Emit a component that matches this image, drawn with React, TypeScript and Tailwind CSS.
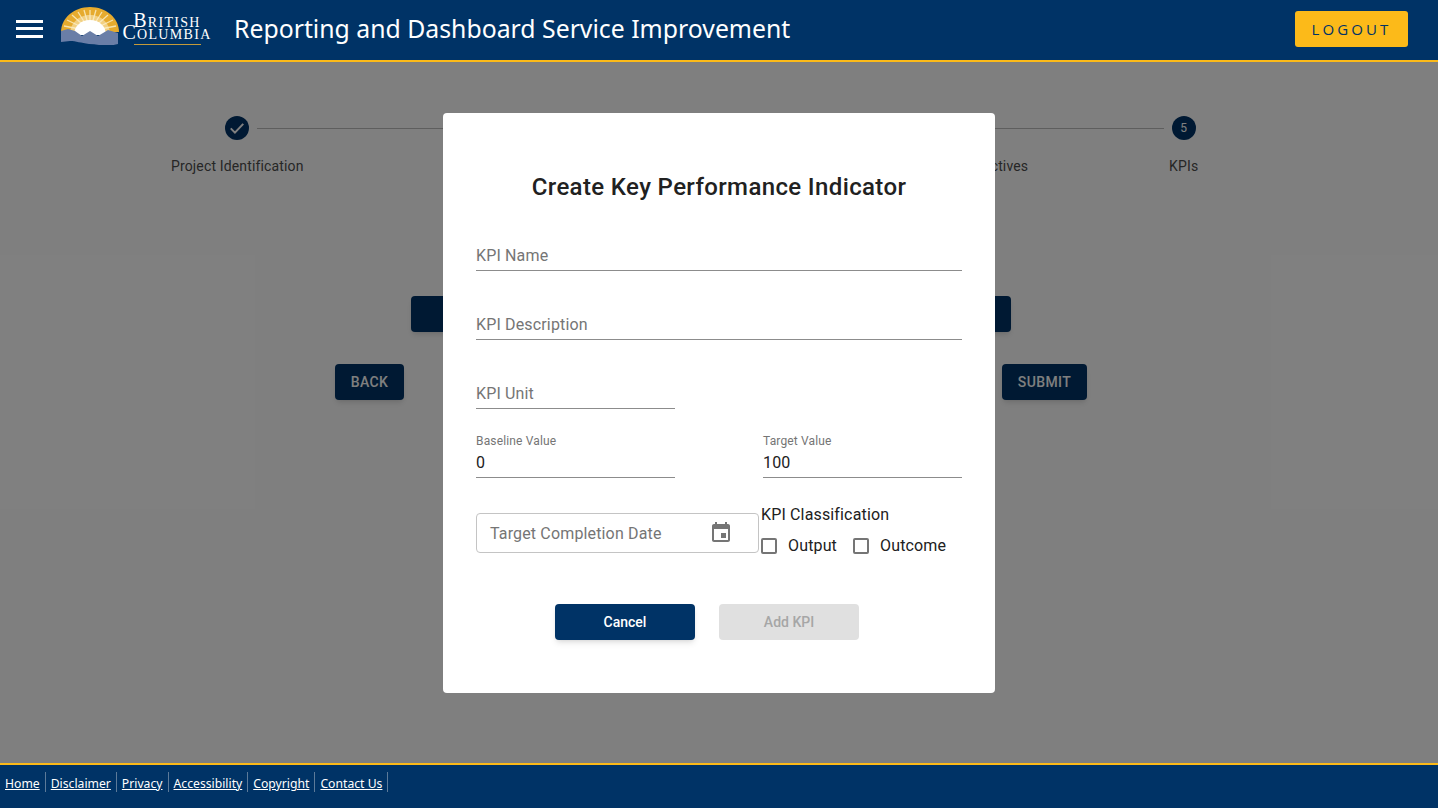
const footerLinks = ["Home", "Disclaimer", "Privacy", "Accessibility", "Copyright", "Contact Us"];

const steps = [
  { label: "Project Identification", done: true },
  { label: "Details", done: true },
  { label: "Scope", done: true },
  { label: "Organizational Objectives", done: true },
  { label: "KPIs", done: false, num: 5 },
];

// BC logo, sun and mountains
const BcLogo = () => (
  <svg width="60" height="38" viewBox="0 0 60 38">
    <path d="M1 25C1 11 14 0 30 0s29 11 29 25z" fill="#e6ab2e" />
    <g stroke="#f7e3ac" strokeWidth="1.3">
      <path d="M30 24V3M30 24L24 3M30 24L36 3M30 24L18 5M30 24L42 5M30 24L12 8M30 24L48 8M30 24L7 13M30 24L53 13M30 24L4 19M30 24L56 19" />
    </g>
    <path d="M10 27c0-11 9-19 20-19s20 8 20 19z" fill="#fbeec8" opacity="0.55" />
    <path d="M14 28c0-9 7-15 16-15s16 6 16 15z" fill="#ffffff" />
    <path d="M1 24l7-2 7 2 7 5 8-5 8 5 10-6 10 3v11l-9 2c-7 0-13-2-20-2-8-1-13-3-19-3l-9 1z" fill="#6a7ea7" />
  </svg>
);

const Field = ({ label, value, className = "" }: { label: string; value?: string; className?: string }) => (
  <div className={`flex h-[48px] flex-col border-b border-[#8c8c8c] tracking-[0.15px] ${value ? "pt-[4px]" : "justify-end"} ${className}`}>
    {value ? (
      <>
        <span className="text-xs leading-[14px] text-[#757575]">{label}</span>
        <span className="mt-auto pb-[2px] text-base leading-6 text-[#212121]">{value}</span>
      </>
    ) : (
      <span className="pb-[2px] text-base leading-6 text-[#757575]">{label}</span>
    )}
  </div>
);

const Check = ({ label }: { label: string }) => (
  <div className="flex items-center">
    <div className="h-4 w-4 rounded-[2px] border-2 border-[#757575]" />
    <span className="ml-[11px] text-base leading-6 tracking-[0.15px] text-[#212121]">{label}</span>
  </div>
);

export default function App() {
  return (
    <div className="relative flex h-[808px] flex-col overflow-hidden bg-white font-['Roboto',sans-serif]">
      <header className="z-20 flex h-[62px] shrink-0 items-center border-b-2 border-[#fcba19] bg-[#003366] text-white">
        <div className="-mt-[2px] ml-4 flex w-[27px] flex-col">
          <div className="mb-[4px] h-[3px] bg-white" />
          <div className="mb-[5px] h-[3px] bg-white" />
          <div className="h-[3px] bg-white" />
        </div>
        <div className="ml-[17px] flex items-center">
          <div className="-mt-[8px]">
            <BcLogo />
          </div>
          <div className="-mt-[2px] ml-[3px] flex w-[88px] flex-col items-center font-['Liberation_Serif',serif] [font-variant-caps:small-caps]">
            <span className="text-center text-[20px] leading-[12.5px] tracking-[1.3px] whitespace-nowrap">
              British
              <br />
              Columbia
            </span>
            <div className="mt-[5px] h-px w-[67px] bg-[#c49a3a]" />
          </div>
        </div>
        <h1 className="-mt-[2px] ml-[23px] font-['Noto_Sans',sans-serif] text-[24.8px] font-normal">
          Reporting and Dashboard Service Improvement
        </h1>
        <button className="mb-[2px] ml-auto mr-[30px] h-9 w-[113px] rounded-[3px] bg-[#fcba19] font-['Open_Sans',sans-serif] text-[15px] tracking-[3.1px] text-[#003366]">
          LOGOUT
        </button>
      </header>

      <main className="relative flex-1">
        <div className="ml-[119px] mt-[54px] flex w-[1183px]">
          {steps.map((s, i) => (
            <div key={s.label} className="relative flex flex-1 flex-col items-center">
              {i > 0 && (
                <div className="absolute left-[calc(-50%+20px)] right-[calc(50%+20px)] top-3 h-px bg-[#bdbdbd]" />
              )}
              <div className="flex h-6 w-6 items-center justify-center rounded-full bg-[#003366] text-xs text-white">
                {s.done ? (
                  <svg width="20" height="20" viewBox="0 0 24 24" fill="none" stroke="#ffffff" strokeWidth="2.4">
                    <path d="M4.5 12.5l5 5L19.5 7" />
                  </svg>
                ) : (
                  s.num
                )}
              </div>
              <span className="mt-4 text-sm leading-5 tracking-[0.15px] text-[#4d4d4d]">{s.label}</span>
            </div>
          ))}
        </div>

        <div className="ml-[411px] mt-[120px] h-9 w-[600px] rounded bg-[#003366] shadow-md" />

        <div className="ml-[335px] mt-8 flex w-[752px] justify-between">
          <button className="h-9 w-[69px] rounded bg-[#003366] text-sm font-medium tracking-[0.4px] text-white shadow-md">
            BACK
          </button>
          <button className="h-9 w-[85px] rounded bg-[#003366] text-sm font-medium tracking-[0.4px] text-white shadow-md">
            SUBMIT
          </button>
        </div>

        {/* dim layer and dialog */}
        <div className="absolute inset-0 bg-black/50" />
        <div className="absolute left-[443px] top-[51px] h-[580px] w-[552px] rounded bg-white px-[33px]">
          <h2 className="mt-[58px] text-center text-2xl font-medium leading-8 tracking-[0.37px] text-[#212121]">
            Create Key Performance Indicator
          </h2>
          <Field label="KPI Name" className="mt-[20px]" />
          <Field label="KPI Description" className="mt-[21px]" />
          <Field label="KPI Unit" className="mt-[21px] w-[199px]" />
          <div className="mt-[21px] flex justify-between">
            <Field label="Baseline Value" value="0" className="w-[199px]" />
            <Field label="Target Value" value="100" className="w-[199px]" />
          </div>
          <div className="mt-[35px] flex items-start">
            <div className="flex h-10 w-[283px] items-center justify-between rounded border border-[#c4c4c4] pl-[13px] pr-[25px]">
              <span className="mt-[1px] text-base tracking-[0.15px] text-[#757575]">Target Completion Date</span>
              <svg width="24" height="24" viewBox="0 0 24 24" fill="#757575">
                <path d="M17 12h-5v5h5v-5zM16 1v2H8V1H6v2H5c-1.11 0-1.99.9-1.99 2L3 19c0 1.1.89 2 2 2h14c1.1 0 2-.9 2-2V5c0-1.1-.9-2-2-2h-1V1h-2zm3 18H5V8h14v11z" />
              </svg>
            </div>
            <div className="-mt-[10px] ml-[2px]">
              <div className="text-base leading-6 tracking-[0.15px] text-[#212121]">KPI Classification</div>
              <div className="mt-[7px] flex gap-[16px]">
                <Check label="Output" />
                <Check label="Outcome" />
              </div>
            </div>
          </div>
          <div className="ml-[79px] mt-[46px] flex gap-6">
            <button className="h-9 w-[140px] rounded bg-[#003366] text-sm font-medium text-white shadow-md">
              Cancel
            </button>
            <button disabled className="h-9 w-[140px] rounded bg-[#e0e0e0] text-sm font-medium text-[#a6a6a6]">
              Add KPI
            </button>
          </div>
        </div>
      </main>

      <footer className="z-20 flex h-[45px] shrink-0 items-start border-t-2 border-[#fcba19] bg-[#003366] pl-[5px] pt-[7px] font-['Noto_Sans',sans-serif] text-[12.2px] text-white">
        {footerLinks.map((l) => (
          <div key={l} className="mr-[5px] flex h-5 items-center border-r border-[#5c7a99] pr-[5px]">
            <a href="#" className="mt-[4px] underline">
              {l}
            </a>
          </div>
        ))}
      </footer>
    </div>
  );
}
